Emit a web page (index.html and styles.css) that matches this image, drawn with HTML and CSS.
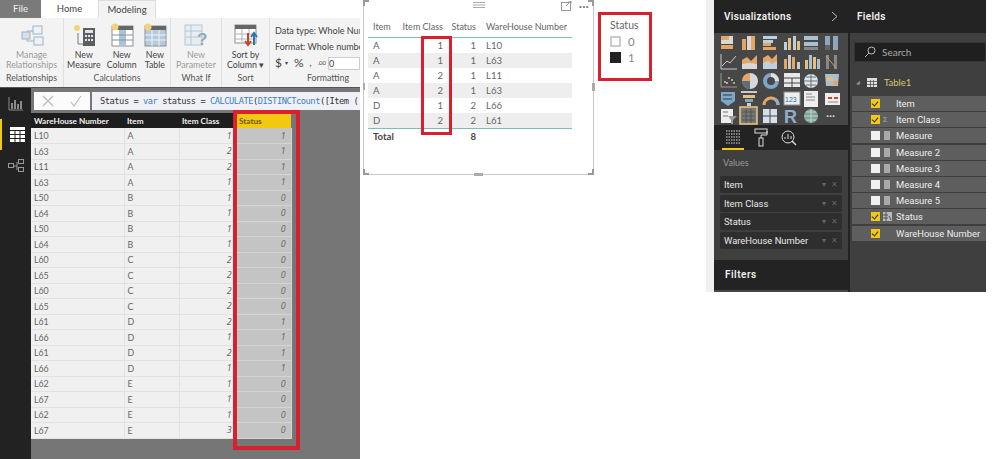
FILE: index.html
```html
<!DOCTYPE html>
<html lang="en">
<head>
    <meta charset="UTF-8">
    <title>Status column</title>
    <link rel="stylesheet" href="styles.css">
</head>
<body>
<div class="page">

    <!-- desktop window: ribbon, formula bar, data grid -->
    <div class="left">
        <div class="tabs">
            <div class="tab tab-file">File</div>
            <div class="tab tab-home">Home</div>
            <div class="tab tab-active">Modeling</div>
        </div>
        <div class="ribbon">
            <div class="group group-rel">
                <div class="group-items">
                    <div class="tool muted">
                        <svg class="tool-icon" width="24" height="24" viewBox="0 0 24 24"><path d="M7 12V8h6M7 15v3h7M11 8h2" stroke="#9fb3c4" fill="none"/><rect x="2" y="9" width="8" height="7" fill="#d5e0ea" stroke="#9fb3c4"/><rect x="13" y="3" width="9" height="8" fill="#eef2f6" stroke="#9fb3c4"/><rect x="14" y="14" width="9" height="8" fill="#eef2f6" stroke="#9fb3c4"/></svg>
                        <span>Manage<br>Relationships</span>
                    </div>
                </div>
                <div class="group-name">Relationships</div>
            </div>
            <div class="group group-calc">
                <div class="group-items">
                    <div class="tool">
                        <svg class="tool-icon" width="24" height="24" viewBox="0 0 24 24"><circle cx="5" cy="5" r="3" fill="#f3d27a"/><path d="M6 10v11h6" stroke="#777" fill="none"/><rect x="11" y="5" width="12" height="18" fill="#5b5f63"/><rect x="13" y="7" width="8" height="3" fill="#dfe4e8"/><path d="M13 12h2v2h-2zM16 12h2v2h-2zM19 12h2v2h-2zM13 16h2v2h-2zM16 16h2v2h-2zM19 16h2v2h-2z" fill="#dfe4e8"/></svg>
                        <span>New<br>Measure</span>
                    </div>
                    <div class="tool">
                        <svg class="tool-icon" width="24" height="24" viewBox="0 0 24 24"><rect x="2" y="3" width="21" height="20" fill="#fff" stroke="#8a9198"/><rect x="2" y="3" width="21" height="4" fill="#666"/><rect x="9" y="7" width="7" height="16" fill="#a9c3d8"/><path d="M2 12h21M2 17h21" stroke="#8a9198"/><circle cx="5" cy="4" r="3.5" fill="#f3d27a"/></svg>
                        <span>New<br>Column</span>
                    </div>
                    <div class="tool">
                        <svg class="tool-icon" width="24" height="24" viewBox="0 0 24 24"><rect x="2" y="3" width="21" height="20" fill="#b4cbdd" stroke="#8a9198"/><rect x="2" y="3" width="21" height="4" fill="#666"/><path d="M2 12h21M2 17h21M9 7v16M16 7v16" stroke="#eef2f6"/><circle cx="5" cy="4" r="3.5" fill="#f3d27a"/></svg>
                        <span>New<br>Table</span>
                    </div>
                </div>
                <div class="group-name">Calculations</div>
            </div>
            <div class="group group-what">
                <div class="group-items">
                    <div class="tool muted">
                        <svg class="tool-icon" width="24" height="24" viewBox="0 0 24 24"><rect x="1" y="2" width="17" height="20" fill="#e6edf3" stroke="#b8c6d2"/><path d="M1 8h17M1 14h17M7 2v20" stroke="#b8c6d2"/><text x="13" y="22" font-size="17" font-weight="700" fill="#8fa9bd" font-family="Liberation Sans">?</text></svg>
                        <span>New<br>Parameter</span>
                    </div>
                </div>
                <div class="group-name">What If</div>
            </div>
            <div class="group group-sort">
                <div class="group-items">
                    <div class="tool">
                        <svg class="tool-icon" width="24" height="24" viewBox="0 0 24 24"><rect x="1" y="2" width="21" height="18" fill="#fff" stroke="#8a9198"/><rect x="1" y="2" width="21" height="4" fill="#666"/><path d="M8 6v14M15 6v14M1 11h21M1 16h21" stroke="#a9b4bd"/><path d="M14 10v11M11 18l3 4 3-4" stroke="#c8452c" stroke-width="2" fill="none"/><path d="M20 22V11M17 14l3-4 3 4" stroke="#2f75b5" stroke-width="2" fill="none"/></svg>
                        <span>Sort by<br>Column &#9662;</span>
                    </div>
                </div>
                <div class="group-name">Sort</div>
            </div>
            <div class="group group-format">
                <div class="format-lines">
                    <div>Data type: Whole Num</div>
                    <div>Format: Whole numbe</div>
                    <div class="format-row"><span class="big">$</span><span class="tiny">&#9662;</span><span class="big">%</span><span>,</span><span class="dec">.00</span><span class="zero">0</span></div>
                </div>
                <div class="group-name">Formatting</div>
            </div>
        </div>
        <div class="work">
            <div class="rail">
                <div class="rail-item">
                    <svg width="16" height="14" viewBox="0 0 16 14"><path d="M1 0v13h14M1 13" stroke="#8a8a8a" fill="none"/><path d="M4 6v6M7 3v9M10 7v5M13 4v8" stroke="#8a8a8a" stroke-width="2"/></svg>
                </div>
                <div class="rail-item rail-active">
                    <svg width="15" height="15" viewBox="0 0 15 15"><rect width="15" height="15" fill="#fff"/><rect y="0" width="15" height="3" fill="#fff"/><path d="M0 3.500h15M0 7.500h15M0 11.500h15M5 3v12M10 3v12" stroke="#222"/></svg>
                </div>
                <div class="rail-item">
                    <svg width="16" height="15" viewBox="0 0 16 15"><path d="M6 8h3M9 4v8" stroke="#999" fill="none"/><rect x=".5" y="5.500" width="5" height="4" fill="none" stroke="#999"/><rect x="10.500" y="1.500" width="5" height="4" fill="none" stroke="#999"/><rect x="10.500" y="9.500" width="5" height="4" fill="none" stroke="#999"/></svg>
                </div>
            </div>
            <div class="canvas">
                <div class="formula">
                    <div class="formula-btns">
                        <svg width="12" height="12" viewBox="0 0 12 12"><path d="M1 1l10 10M11 1L1 11" stroke="#bbb" stroke-width="1.2"/></svg>
                        <svg width="12" height="12" viewBox="0 0 12 12"><path d="M1 7l3 4 7-10" stroke="#bbb" stroke-width="1.2" fill="none"/></svg>
                    </div>
                    <div class="formula-text">Status = <b>var</b> statuss = <b>CALCULATE</b>(<b>DISTINCTcount</b>([Item (</div>
                </div>
                <div class="grid-wrap">
                    <table class="grid">
                        <thead>
                            <tr><th class="c-wh">WareHouse Number</th><th class="c-item">Item</th><th class="c-class">Item Class</th><th class="c-status">Status</th></tr>
                        </thead>
                        <tbody>
                            <tr><td>L10</td><td>A</td><td class="num">1</td><td class="num sel">1</td></tr>
                            <tr><td>L63</td><td>A</td><td class="num">2</td><td class="num sel">1</td></tr>
                            <tr><td>L11</td><td>A</td><td class="num">2</td><td class="num sel">1</td></tr>
                            <tr><td>L63</td><td>A</td><td class="num">1</td><td class="num sel">1</td></tr>
                            <tr><td>L50</td><td>B</td><td class="num">1</td><td class="num sel">0</td></tr>
                            <tr><td>L64</td><td>B</td><td class="num">1</td><td class="num sel">0</td></tr>
                            <tr><td>L50</td><td>B</td><td class="num">1</td><td class="num sel">0</td></tr>
                            <tr><td>L64</td><td>B</td><td class="num">1</td><td class="num sel">0</td></tr>
                            <tr><td>L60</td><td>C</td><td class="num">2</td><td class="num sel">0</td></tr>
                            <tr><td>L65</td><td>C</td><td class="num">2</td><td class="num sel">0</td></tr>
                            <tr><td>L60</td><td>C</td><td class="num">2</td><td class="num sel">0</td></tr>
                            <tr><td>L65</td><td>C</td><td class="num">2</td><td class="num sel">0</td></tr>
                            <tr><td>L61</td><td>D</td><td class="num">2</td><td class="num sel">1</td></tr>
                            <tr><td>L66</td><td>D</td><td class="num">1</td><td class="num sel">1</td></tr>
                            <tr><td>L61</td><td>D</td><td class="num">2</td><td class="num sel">1</td></tr>
                            <tr><td>L66</td><td>D</td><td class="num">1</td><td class="num sel">1</td></tr>
                            <tr><td>L62</td><td>E</td><td class="num">1</td><td class="num sel">0</td></tr>
                            <tr><td>L67</td><td>E</td><td class="num">1</td><td class="num sel">0</td></tr>
                            <tr><td>L62</td><td>E</td><td class="num">1</td><td class="num sel">0</td></tr>
                            <tr><td>L67</td><td>E</td><td class="num">3</td><td class="num sel">0</td></tr>
                        </tbody>
                    </table>
                    <div class="red red-grid"></div>
                </div>
            </div>
        </div>
    </div>

    <!-- report canvas: table visual and legend -->
    <div class="middle">
        <div class="visual">
            <div class="visual-top">
                <svg class="grip" width="12" height="6" viewBox="0 0 12 6"><path d="M0 .5h12M0 3h12M0 5.500h12" stroke="#aaa"/></svg>
                <div class="visual-actions">
                    <svg width="11" height="10" viewBox="0 0 11 10"><rect x=".5" y="1.500" width="9" height="8" fill="none" stroke="#999"/><path d="M5 5l5-5M7 0h3v3" stroke="#999" fill="none"/></svg>
                    <span class="dots">&#183;&#183;&#183;</span>
                </div>
            </div>
            <table class="report">
                <thead>
                    <tr><th>Item</th><th class="num">Item Class</th><th class="num">Status</th><th class="wh">WareHouse Number</th></tr>
                </thead>
                <tbody>
                    <tr><td>A</td><td class="num">1</td><td class="num">1</td><td class="wh">L10</td></tr>
                    <tr class="alt"><td>A</td><td class="num">1</td><td class="num">1</td><td class="wh">L63</td></tr>
                    <tr><td>A</td><td class="num">2</td><td class="num">1</td><td class="wh">L11</td></tr>
                    <tr class="alt"><td>A</td><td class="num">2</td><td class="num">1</td><td class="wh">L63</td></tr>
                    <tr><td>D</td><td class="num">1</td><td class="num">2</td><td class="wh">L66</td></tr>
                    <tr class="alt"><td>D</td><td class="num">2</td><td class="num">2</td><td class="wh">L61</td></tr>
                </tbody>
                <tfoot>
                    <tr><td>Total</td><td></td><td class="num">8</td><td></td></tr>
                </tfoot>
            </table>
            <div class="red red-class"></div>
            <span class="handle h-left"></span>
            <span class="handle h-right"></span>
            <span class="handle h-bottom"></span>
            <span class="corner c-tl"></span>
            <span class="corner c-tr"></span>
            <span class="corner c-bl"></span>
            <span class="corner c-br"></span>
        </div>
        <div class="legend">
            <div class="legend-title">Status</div>
            <div class="legend-row"><span class="swatch swatch-off"></span>0</div>
            <div class="legend-row"><span class="swatch swatch-on"></span>1</div>
        </div>
    </div>

    <!-- right hand panes -->
    <div class="right">
        <div class="viz">
            <div class="pane-head">Visualizations
                <svg width="7" height="11" viewBox="0 0 7 11"><path d="M1 1l5 4.500-5 4.500" stroke="#bbb" fill="none"/></svg>
            </div>
            <div class="viz-icons">
                <svg width="134" height="92" viewBox="0 0 134 92">
                    <g fill="#e2a766"><rect x="7" y="3" width="8" height="4"/><rect x="7" y="12" width="12" height="4"/><rect x="28" y="6" width="4" height="11"/><rect x="37" y="3" width="4" height="14"/></g>
                    <g fill="#d8d8d8"><rect x="15" y="3" width="4" height="4"/><rect x="7" y="7" width="12" height="4"/><rect x="33" y="3" width="4" height="14"/></g>
                    <g fill="#e2a766"><rect x="49" y="10" width="8" height="3"/><rect x="49" y="14" width="13" height="3"/></g><g fill="#bcd0e0"><rect x="49" y="3" width="14" height="3"/><rect x="49" y="7" width="10" height="3"/></g>
                    <g fill="#bcd0e0"><rect x="70" y="9" width="3" height="8"/><rect x="79" y="3" width="3" height="14"/></g><g fill="#e2c27a"><rect x="74" y="5" width="3" height="12"/><rect x="83" y="8" width="3" height="9"/></g>
                    <g fill="#a9c0d2"><rect x="90" y="3" width="14" height="4"/><rect x="90" y="9" width="14" height="4"/></g><g fill="#888"><rect x="90" y="14" width="14" height="3"/></g>
                    <g fill="#8fa6b8"><rect x="111" y="3" width="5" height="14"/><rect x="119" y="3" width="5" height="14"/></g><g fill="#666"><rect x="111" y="12" width="5" height="5"/></g>

                    <path d="M7 21v15h16M8 33l5-5 3 2 6-7" stroke="#c9c9c9" fill="none"/>
                    <path d="M28 36v-9l5-3 4 4 6-6v14z" fill="#e2a766"/><path d="M28 36v-5l7-1 8 1v5z" fill="#d8d8d8"/>
                    <path d="M49 36v-11l5-3 4 4 5-5v15z" fill="#e2a766"/><path d="M49 36v-6l5-2 4 3 5-3v8z" fill="#bcd0e0"/>
                    <g fill="#e2a766"><rect x="70" y="26" width="3" height="10"/><rect x="78" y="24" width="3" height="12"/></g><g fill="#ccc"><rect x="74" y="22" width="3" height="14"/><rect x="83" y="29" width="3" height="7"/></g>
                    <g fill="#e2c27a"><rect x="91" y="27" width="3" height="9"/><rect x="99" y="24" width="3" height="12"/></g><g fill="#a9c0d2"><rect x="95" y="22" width="3" height="14"/><rect x="103" y="26" width="3" height="10"/></g>
                    <path d="M112 36V22h3v14zM120 36V22h3v14z" fill="#888"/><path d="M112 23l10 12" stroke="#cf9a5f" fill="none"/>

                    <path d="M7 40v14h16" stroke="#999" fill="none"/><g fill="#e2c27a"><circle cx="11" cy="49" r="1"/><circle cx="15" cy="45" r="1"/><circle cx="20" cy="50" r="1"/></g><g fill="#bcd0e0"><circle cx="13" cy="50" r="1"/><circle cx="18" cy="47" r="1"/></g>
                    <path d="M36 40a8 8 0 0 1 0 16z" fill="#d8d8d8"/><path d="M36 40a8 8 0 1 0 0 16z" fill="#e2a766"/><path d="M36 48h-8a8 8 0 0 0 8 8z" fill="#5c6d7c"/>
                    <circle cx="57" cy="48" r="6" fill="none" stroke="#7fa6c6" stroke-width="4"/><path d="M57 42a6 6 0 0 1 6 6" fill="none" stroke="#e0e0e0" stroke-width="4"/>
                    <rect x="70" y="40" width="16" height="14" fill="#e8e8e8"/><path d="M70 45h16M70 50h16M78 45v9" stroke="#444"/>
                    <circle cx="97" cy="48" r="7" fill="#dbe6ef"/><path d="M90 48h14M97 41v14M92 44h10M92 52h10" stroke="#555" stroke-width=".8" fill="none"/>
                    <path d="M111 41h14l-1 12h-12z" fill="#a9c0d2"/><path d="M113 44h6v4h-6z" fill="#e2c27a"/><path d="M119 48h5v4h-5z" fill="#e2a766"/>

                    <path d="M7 59h14v9l-7 5-7-5z" fill="#7fa6c6"/><path d="M9 62h9M9 66h9" stroke="#2c3e50"/>
                    <g fill="#ccc"><rect x="27" y="58" width="16" height="2"/></g><rect x="29" y="62" width="12" height="3" fill="#e2c27a"/><rect x="31" y="66" width="8" height="3" fill="#7fa6c6"/><rect x="33" y="70" width="4" height="3" fill="#ccc"/>
                    <path d="M50 72a7 7 0 0 1 14 0" fill="none" stroke="#e2a766" stroke-width="3"/><path d="M61 66a7 7 0 0 1 3 6" fill="none" stroke="#8fb0c8" stroke-width="3"/>
                    <rect x="70" y="59" width="16" height="13" fill="#eee" stroke="#8a9198"/><text x="71" y="69" font-size="7" fill="#2f6ea5" font-family="Liberation Sans">123</text>
                    <rect x="90" y="58" width="14" height="16" fill="#eee"/><path d="M92 61h6M92 64h9M92 67h9" stroke="#888"/>
                    <rect x="111" y="60" width="15" height="12" fill="#eee"/><path d="M114 65h4M120 65h4" stroke="#c8452c" stroke-width="2"/><path d="M114 69h10" stroke="#888"/>

                    <rect x="7" y="76" width="12" height="14" fill="#eee"/><path d="M9 79h5M9 83h5" stroke="#777"/><path d="M14 83h9l-4 4v4h-2v-4z" fill="#999"/>
                    <rect x="26" y="74" width="17" height="17" fill="#777" stroke="#e2c27a" stroke-width="1.600"/><path d="M28 79h13M28 83h13M28 87h13M32 76v14M37 76v14" stroke="#555"/>
                    <rect x="49" y="76" width="14" height="14" fill="#d5e0ea"/><path d="M49 83h14M56 76v14" stroke="#474747"/>
                    <text x="70" y="90" font-size="18" font-weight="700" fill="#8fb0c8" font-family="Liberation Sans">R</text>
                    <circle cx="97" cy="83" r="7" fill="#7fa68f"/><path d="M90 83h14M97 76v14M92 79h10M92 87h10" stroke="#cde" stroke-width=".8"/>
                    <text x="112" y="84" font-size="11" font-weight="700" fill="#ddd" font-family="Liberation Sans">...</text>
                </svg>
            </div>
            <div class="viz-tabs">
                <div class="viz-tab viz-tab-on">
                    <svg width="16" height="16" viewBox="0 0 16 16"><path d="M1 2h14M1 5h14M1 8h14M1 11h14M1 14h14" stroke="#ddd" stroke-dasharray="1.500 1"/></svg>
                </div>
                <div class="viz-tab">
                    <svg width="14" height="19" viewBox="0 0 14 19"><rect x="1" y="1" width="12" height="4" fill="none" stroke="#ddd"/><path d="M13 3v4H7v3" stroke="#ddd" fill="none"/><rect x="5" y="10" width="4" height="8" fill="none" stroke="#ddd"/></svg>
                </div>
                <div class="viz-tab">
                    <svg width="16" height="16" viewBox="0 0 16 16"><circle cx="7" cy="7" r="6" fill="none" stroke="#ddd"/><path d="M11 11l4 4" stroke="#ddd" stroke-width="1.500"/><path d="M4 9V7M7 9V4M10 9V6" stroke="#ddd"/></svg>
                </div>
            </div>
            <div class="values">
                <div class="values-label">Values</div>
                <div class="well">
                    <div class="pill"><span>Item</span><i>&#9662;</i><i>&#10005;</i></div>
                    <div class="pill"><span>Item Class</span><i>&#9662;</i><i>&#10005;</i></div>
                    <div class="pill"><span>Status</span><i>&#9662;</i><i>&#10005;</i></div>
                    <div class="pill"><span>WareHouse Number</span><i>&#9662;</i><i>&#10005;</i></div>
                </div>
            </div>
            <div class="filters">Filters</div>
            <div class="viz-end"></div>
        </div>
        <div class="fields">
            <div class="pane-head">Fields</div>
            <div class="search-band">
                <div class="search">
                    <svg width="12" height="12" viewBox="0 0 12 12"><circle cx="7.500" cy="4.500" r="3.500" fill="none" stroke="#bbb"/><path d="M5 7l-4 4" stroke="#bbb"/></svg>
                    Search
                </div>
            </div>
            <div class="field-table">
                <span class="arrow">&#9698;</span>
                <svg width="10" height="9" viewBox="0 0 10 9"><rect width="10" height="9" fill="#ddd"/><path d="M0 3.500h10M0 6.500h10M3.500 2v7M6.500 2v7" stroke="#444" stroke-width=".7"/></svg>
                <span class="table-name">Table1</span>
            </div>
            <div class="field"><span class="check on"></span><span class="kind"></span>Item</div>
            <div class="field"><span class="check on"></span><span class="kind sum">&#931;</span>Item Class</div>
            <div class="field"><span class="check"></span><span class="kind calc"></span>Measure</div>
            <div class="field"><span class="check"></span><span class="kind calc"></span>Measure 2</div>
            <div class="field"><span class="check"></span><span class="kind calc"></span>Measure 3</div>
            <div class="field"><span class="check"></span><span class="kind calc"></span>Measure 4</div>
            <div class="field"><span class="check"></span><span class="kind calc"></span>Measure 5</div>
            <div class="field"><span class="check on"></span><span class="kind"><svg width="9" height="9" viewBox="0 0 9 9"><rect width="9" height="9" fill="#bbb"/><path d="M0 3h5M0 6h5M3 0v9M6 4l2 4" stroke="#555"/></svg></span>Status</div>
            <div class="field"><span class="check on"></span><span class="kind"></span>WareHouse Number</div>
        </div>
    </div>

</div>
</body>
</html>
```

FILE: styles.css
```css
body {
    margin: 0;
    padding: 0;
    background-color: #fff;
    font-family: 'Lato', 'Open Sans', sans-serif;
    overflow: hidden;
}

.page {
    display: flex;
    width: 999px;
    height: 459px;
}

/* left window */
.left {
    width: 360px;
    height: 459px;
    flex: none;
    overflow: hidden;
    display: flex;
    flex-direction: column;
}

.tabs {
    display: flex;
    height: 18px;
    font-size: 9.5px;
    color: #444;
}

.tab {
    line-height: 18px;
    text-align: center;
}

.tab-file {
    width: 41px;
    background-color: #7a7a7a;
    color: #eee;
}

.tab-home {
    width: 57px;
}

.tab-active {
    width: 58px;
    background-color: #f3f3f3;
    border: 1px solid #ddd;
    border-bottom: none;
    box-sizing: border-box;
}

.ribbon {
    display: flex;
    height: 69px;
    flex: none;
    background-color: #f3f3f3;
    font-size: 8.8px;
    color: #444;
}

.group {
    display: flex;
    flex-direction: column;
    flex: none;
    border-right: 1px solid #e0e0e0;
    box-sizing: border-box;
    padding-top: 5px;
}

.group-rel { width: 64px; }
.group-calc { width: 107px; }
.group-what { width: 51px; }
.group-sort { width: 48px; }
.group-format { width: 90px; border-right: none; }

.group-items {
    display: flex;
    justify-content: space-around;
    height: 47px;
    flex: none;
}

.tool {
    display: flex;
    flex-direction: column;
    align-items: center;
    text-align: center;
    line-height: 10px;
}

.tool-icon {
    margin-bottom: 3px;
}

.muted {
    color: #9a9a9a;
}

.group-name {
    height: 15px;
    line-height: 14px;
    margin-top: auto;
    margin-bottom: 1px;
    text-align: center;
    color: #555;
}

.group-format .group-name {
    text-align: left;
    padding-left: 37px;
}

.format-lines {
    height: 47px;
    padding: 0 0 0 5px;
    white-space: nowrap;
    line-height: 16px;
    font-size: 9px;
}

.format-row {
    display: flex;
    align-items: center;
    gap: 6px;
    height: 16px;
}

.big { font-size: 12px; }
.tiny { font-size: 6px; margin-left: -3px; }
.dec { font-size: 6px; }

.zero {
    background-color: #fff;
    border: 1px solid #ccc;
    width: 40px;
    height: 11px;
    line-height: 11px;
    margin-left: -4px;
}

.work {
    flex: 1;
    display: flex;
    background-color: #222;
    border-top: 1px solid #555;
}

.rail {
    width: 31px;
    flex: none;
    background-color: #222;
    display: flex;
    flex-direction: column;
}

.rail-item {
    height: 31px;
    display: flex;
    align-items: center;
    justify-content: center;
    padding-left: 1px;
}

.rail-active {
    border-left: 2px solid #f2c811;
    box-sizing: border-box;
}

.canvas {
    flex: 1;
    background-color: #767676;
    display: flex;
    flex-direction: column;
}

.formula {
    display: flex;
    height: 18px;
    margin-top: 4px;
    margin-left: 3px;
    gap: 2px;
}

.formula-btns {
    width: 56px;
    background-color: #fbfbfb;
    display: flex;
    align-items: center;
    justify-content: space-around;
    flex: none;
}

.formula-text {
    flex: 1;
    background-color: #f0f1f6;
    font-family: 'DejaVu Sans Mono', monospace;
    font-size: 8.7px;
    letter-spacing: -.45px;
    line-height: 18px;
    padding-left: 8px;
    white-space: nowrap;
    overflow: hidden;
    color: #333;
}

.formula-text b {
    font-weight: normal;
    color: #3c7fc4;
}

.grid-wrap {
    position: relative;
    margin-top: 3px;
}

.grid {
    border-collapse: collapse;
    table-layout: fixed;
    width: 260px;
    font-size: 8.8px;
}

.grid th {
    height: 15px;
    box-sizing: border-box;
    padding: 0 3px;
    background-color: #1e1e1e;
    color: #f0f0f0;
    text-align: left;
    font-weight: 700;
    font-size: 8.2px;
    white-space: nowrap;
    overflow: hidden;
}

.grid .c-wh { width: 93px; }
.grid .c-item { width: 55px; }
.grid .c-class { width: 57px; }
.grid .c-status { width: 55px; background-color: #f2c811; color: #6b5a10; padding-left: 3px; }

.grid td {
    height: 15.5px;
    box-sizing: border-box;
    padding: 0 3px;
    background-color: #f0f0f0;
    color: #666;
    border-right: 1px solid #e2e2e2;
    border-bottom: 1px solid #e2e2e2;
}

.grid .num {
    text-align: right;
    font-family: 'Open Sans', sans-serif;
    font-style: italic;
    padding-right: 4px;
}

.grid .sel {
    background-color: #c4c4c4;
    border-color: #d4d4d4;
    padding-right: 5px;
}

.red {
    position: absolute;
    box-sizing: border-box;
    border: 4px solid #d9202e;
}

.red-grid {
    left: 202px;
    top: -3px;
    width: 67px;
    height: 340px;
}

/* report canvas */
.middle {
    width: 346px;
    flex: none;
    display: flex;
    align-items: flex-start;
    padding-left: 3px;
    box-sizing: border-box;
}

.visual {
    position: relative;
    width: 231px;
    height: 175px;
    box-sizing: border-box;
    border: 1px solid #c8c8c8;
    border-top: none;
    flex: none;
    font-size: 9px;
    color: #666;
    padding: 0 0 0 4px;
}

.visual-top {
    display: flex;
    justify-content: flex-end;
    align-items: center;
    height: 17px;
}

.grip {
    position: absolute;
    left: 109px;
    top: 2px;
}

.visual-actions {
    display: flex;
    align-items: center;
    gap: 7px;
    padding-right: 4px;
    margin-top: -6px;
}

.dots {
    font-size: 13px;
    line-height: 10px;
    color: #777;
}

.report {
    border-collapse: collapse;
    table-layout: fixed;
    width: 204px;
}

.report th {
    height: 20px;
    box-sizing: border-box;
    font-weight: normal;
    text-align: left;
    padding: 0 4px 0 5px;
    border-bottom: 1px solid #7fbcb8;
    white-space: nowrap;
}

.report th:nth-child(1) { width: 29px; }
.report th:nth-child(2) { width: 47px; }
.report th:nth-child(3) { width: 33px; }

.report td {
    height: 15px;
    padding: 0 4px 0 5px;
    font-size: 9.6px;
}

.report .num {
    text-align: right;
    padding: 0 1px 0 0;
}

.report .wh {
    padding-left: 9px;
    text-align: left;
}

.report th.wh {
    padding-left: 9px;
}

.report .alt td {
    background-color: #eeeeee;
}

.report tfoot td {
    border-top: 1px solid #7fbcb8;
    font-weight: 700;
    color: #444;
}

.red-class {
    left: 57px;
    top: 36px;
    width: 31px;
    height: 99px;
    border-width: 3px;
}

.handle {
    position: absolute;
    background-color: #aaa;
}

.h-left { left: -1px; top: 83px; width: 2px; height: 7px; }
.h-right { right: -2px; top: 83px; width: 3px; height: 8px; }
.h-bottom { left: 110px; bottom: -2px; width: 9px; height: 3px; }

.corner {
    position: absolute;
    width: 6px;
    height: 6px;
    box-sizing: border-box;
    border: 0 solid #999;
}

.c-tl { left: -1px; top: 0; border-width: 2px 0 0 2px; }
.c-tr { right: -1px; top: 0; border-width: 2px 2px 0 0; }
.c-bl { left: -1px; bottom: -1px; border-width: 0 0 2px 2px; }
.c-br { right: -1px; bottom: -1px; border-width: 0 2px 2px 0; }

.legend {
    width: 54px;
    height: 69px;
    margin: 12px 0 0 4px;
    box-sizing: border-box;
    border: 3px solid #d9202e;
    padding: 3px 0 0 9px;
    font-size: 10.5px;
    color: #666;
}

.legend-title {
    line-height: 14px;
    margin-bottom: 1px;
}

.legend-row {
    display: flex;
    align-items: center;
    gap: 7px;
    height: 16px;
    font-size: 11.5px;
    color: #888;
}

.swatch {
    width: 11px;
    height: 11px;
    box-sizing: border-box;
}

.swatch-off { border: 2px solid #ccc; }
.swatch-on { background-color: #222; }

/* right hand panes */
.right {
    display: flex;
    height: 292px;
    flex: none;
    width: 280px;
    border-left: 8px solid #f0f0f0;
    box-sizing: border-box;
    background-color: #232323;
}

.viz {
    width: 134px;
    background-color: #232323;
    display: flex;
    flex-direction: column;
    flex: none;
}

.pane-head {
    height: 33px;
    display: flex;
    align-items: center;
    justify-content: space-between;
    padding: 0 10px 0 10px;
    box-sizing: border-box;
    font-size: 10px;
    font-weight: 600;
    color: #f0f0f0;
    background-color: #232323;
    font-family: 'Roboto', 'Open Sans', sans-serif;
    letter-spacing: .3px;
}

.fields .pane-head {
    padding-left: 7px;
}

.viz-icons {
    height: 92px;
    background-color: #474747;
    flex: none;
}

.viz-icons svg {
    display: block;
}

.viz-tabs {
    display: flex;
    height: 25px;
    gap: 6px;
    padding-left: 8px;
    align-items: center;
    flex: none;
}

.viz-tab {
    width: 22px;
    height: 25px;
    display: flex;
    align-items: center;
    justify-content: center;
    box-sizing: border-box;
    flex: none;
}

.viz-tab-on {
    border-bottom: 2px solid #f2c811;
}

.values {
    height: 110px;
    background-color: #3f3f3f;
    box-sizing: border-box;
    padding-top: 8px;
    flex: none;
}

.values-label {
    font-size: 9px;
    color: #999;
    padding-left: 9px;
    line-height: 10px;
    margin-bottom: 8px;
}

.well {
    margin: 0 6px;
    display: flex;
    flex-direction: column;
    gap: 1.500px;
}

.pill {
    height: 17px;
    background-color: #2e2e2e;
    border-radius: 2px;
    display: flex;
    align-items: center;
    gap: 5px;
    padding: 0 4px;
    font-family: 'Roboto', sans-serif;
    font-size: 9.4px;
    color: #e8e8e8;
}

.pill span {
    flex: 1;
    white-space: nowrap;
}

.pill i {
    font-style: normal;
    font-size: 8px;
    color: #666;
}

.filters {
    height: 30px;
    line-height: 30px;
    padding-left: 11px;
    font-size: 10px;
    font-weight: 600;
    color: #eee;
    font-family: 'Roboto', 'Open Sans', sans-serif;
    letter-spacing: .5px;
    flex: none;
}

.viz-end {
    flex: 1;
    background-color: #474747;
}

.fields {
    flex: 1;
    background-color: #3f3f3f;
    margin-left: 2px;
    width: 136px;
}

.search-band {
    height: 37px;
    padding: 9px 0 0 4px;
    box-sizing: border-box;
}

.search {
    height: 20px;
    background-color: #1f1f1f;
    border: 1px solid #333;
    box-sizing: border-box;
    display: flex;
    align-items: center;
    gap: 6px;
    padding-left: 9px;
    font-size: 10px;
    color: #aaa;
}

.field-table {
    height: 26px;
    display: flex;
    align-items: center;
    gap: 7px;
    padding-left: 6px;
    font-size: 9.5px;
    color: #d9c56a;
    box-sizing: border-box;
    padding-bottom: 2px;
}

.arrow {
    font-size: 5px;
    color: #999;
}

.field {
    display: flex;
    align-items: center;
    height: 15px;
    margin-bottom: 1.200px;
    margin-left: 2px;
    background-color: #5e5e5e;
    font-family: 'Roboto', sans-serif;
    font-size: 9.4px;
    color: #eee;
    padding-left: 19px;
    white-space: nowrap;
}

.check {
    width: 9px;
    height: 9px;
    background-color: #f0f0f0;
    flex: none;
    margin-right: 3px;
    position: relative;
}

.check.on {
    background-color: #f2c811;
}

.check.on::after {
    content: "";
    position: absolute;
    left: 2px;
    top: 1px;
    width: 3px;
    height: 5px;
    border: solid #333;
    border-width: 0 1.500px 1.500px 0;
    transform: rotate(40deg);
}

.kind {
    width: 9px;
    margin-right: 4px;
    flex: none;
    display: flex;
    font-size: 8px;
    color: #aaa;
}

.kind.calc {
    height: 9px;
    background-color: #aaa;
    width: 6px;
    margin-left: 1px;
    margin-right: 6px;
}
```
